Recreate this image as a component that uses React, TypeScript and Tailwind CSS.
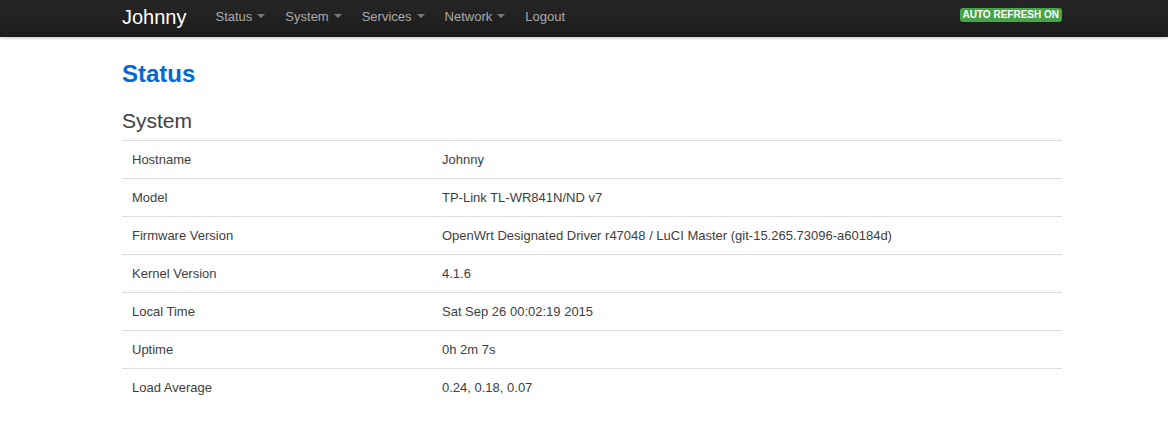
const menus = ["Status", "System", "Services", "Network"];

const rows: [string, string][] = [
  ["Hostname", "Johnny"],
  ["Model", "TP-Link TL-WR841N/ND v7"],
  ["Firmware Version", "OpenWrt Designated Driver r47048 / LuCI Master (git-15.265.73096-a60184d)"],
  ["Kernel Version", "4.1.6"],
  ["Local Time", "Sat Sep 26 00:02:19 2015"],
  ["Uptime", "0h 2m 7s"],
  ["Load Average", "0.24, 0.18, 0.07"],
];

function Caret() {
  return (
    <span className="ml-[5px] inline-block h-0 w-0 translate-y-[-1px] border-x-[4px] border-t-[4px] border-x-transparent border-t-[#7a7a7a]" />
  );
}

export default function App() {
  return (
    <div className="min-h-[433px] bg-white font-['Liberation_Sans',Arial,sans-serif] text-[13px] text-[#404040]">
      <header className="h-[37px] bg-gradient-to-b from-[#262626] to-[#1c1c1c] shadow-[0_1px_3px_rgba(0,0,0,0.25)]">
        <div className="ml-[122px] flex h-full w-[940px] items-center pb-[4px]">
          <span className="text-[20px] leading-none text-white">Johnny</span>
          <nav className="ml-[19px] flex items-center">
            {menus.map((m) => (
              <span key={m} className="flex items-center px-[10px] text-[13px] text-[#aaa]">
                {m}
                <Caret />
              </span>
            ))}
            <span className="px-[10px] text-[13px] text-[#aaa]">Logout</span>
          </nav>
          <span className="ml-auto self-start mt-[8px] rounded-[3px] bg-[#46a546] px-[3px] py-[1px] text-[10px] leading-[12px] font-bold text-white">
            AUTO REFRESH ON
          </span>
        </div>
      </header>

      <main className="ml-[122px] w-[940px]">
        <h1 className="pt-[22px] text-[24px] leading-[30px] font-bold text-[#0069d6]">Status</h1>
        <h2 className="mt-[18px] text-[21px] leading-[28px] text-[#404040]">System</h2>
        <table className="mt-[5px] w-full border-collapse">
          <tbody>
            {rows.map(([k, v]) => (
              <tr key={k} className="border-t border-[#ddd]">
                <td className="h-[38px] w-[310px] px-[10px] align-middle">{k}</td>
                <td className="h-[38px] px-[10px] align-middle">{v}</td>
              </tr>
            ))}
          </tbody>
        </table>
      </main>
    </div>
  );
}
